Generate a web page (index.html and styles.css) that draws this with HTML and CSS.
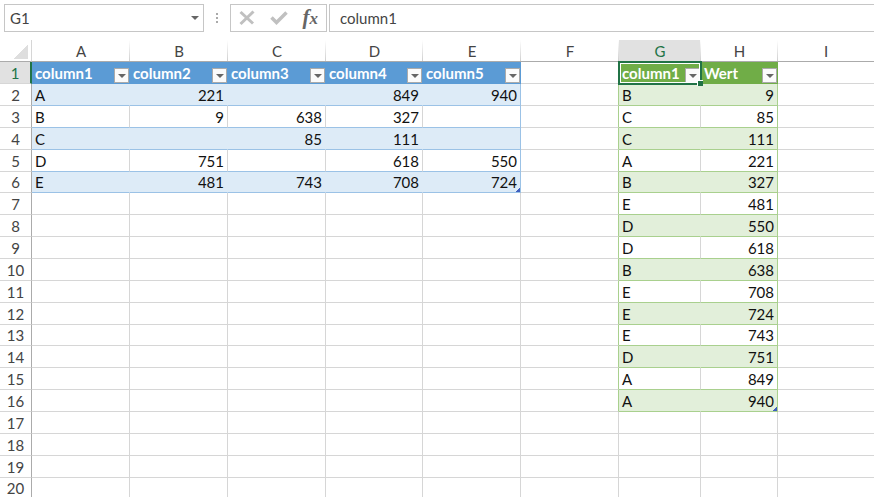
FILE: index.html
```html
<!DOCTYPE html>
<html lang="de">
<head>
    <title>Tabelle</title>
    <meta charset="UTF-8">
    <meta name="viewport" content="width=device-width, initial-scale=1">
    <link rel="stylesheet" href="styles.css">
</head>
<body>
    <div class="toolbar">
        <div class="name-box">
            <input class="name-input" type="text" value="G1" aria-label="Name">
            <button class="name-toggle" type="button" aria-label="Namen anzeigen"><span class="arrow"></span></button>
        </div>
        <div class="grip"><i></i><i></i><i></i></div>
        <div class="actions">
            <button type="button" aria-label="Abbrechen">
                <svg width="18" height="18" viewBox="0 0 18 18">
                    <path d="M2.500 3 L15 14.500 M15.500 2.500 L2.500 15" fill="none" stroke="#c0c0c0" stroke-width="3"/>
                </svg>
            </button>
            <button type="button" aria-label="Eingeben">
                <svg width="18" height="18" viewBox="0 0 18 18">
                    <path d="M1.500 8.500 L6.500 13.500 L16.500 3.500" fill="none" stroke="#c0c0c0" stroke-width="3.500"/>
                </svg>
            </button>
            <button class="fx" type="button" aria-label="Funktion einfügen">f<span>x</span></button>
        </div>
        <input class="formula" type="text" value="column1" aria-label="Bearbeitungsleiste">
    </div>

    <table class="sheet">
        <colgroup>
            <col class="col-head">
            <col class="col-wide"><col class="col-wide"><col class="col-wide"><col class="col-d"><col class="col-wide"><col class="col-wide">
            <col class="col-g"><col class="col-h"><col>
        </colgroup>
        <thead>
            <tr>
                <th class="corner"></th>
                <th>A</th><th>B</th><th>C</th><th>D</th><th>E</th><th>F</th>
                <th class="active">G</th><th>H</th><th>I</th>
            </tr>
        </thead>
        <tbody id="rows"></tbody>
    </table>
    <script src="script.js"></script>
</body>
</html>
```

FILE: styles.css
```css
* {
    box-sizing: border-box;
}

body {
    margin: 0;
    overflow: hidden;
    background-color: white;
    color: #111;
    font-family: Lato, "Liberation Sans", sans-serif;
    font-size: 15px;
}

button, input {
    border: 0;
    padding: 0;
    background: none;
    color: inherit;
    font: inherit;
}

button {
    display: flex;
    align-items: center;
    justify-content: center;
}

/* formula bar */

.toolbar {
    display: flex;
    height: 40px;
    padding: 4px 0 8px 4px;
    color: #444;
}

.name-box, .actions, .formula {
    border: 1px solid #c6c6c6;
}

.name-box {
    display: flex;
    width: 200px;
}

.name-input {
    flex: 1;
    min-width: 0;
    padding-left: 5px;
}

.name-toggle {
    width: 16px;
}

.arrow {
    border: 4px solid transparent;
    border-top-color: #666;
    border-bottom: 0;
}

.grip {
    display: flex;
    flex-direction: column;
    align-items: center;
    justify-content: center;
    gap: 2px;
    width: 26px;
}

.grip i {
    width: 2px;
    height: 2px;
    background-color: #aaa;
}

.actions {
    display: flex;
    width: 97px;
    margin-right: 2px;
}

.actions button {
    flex: 1;
}

.actions .fx {
    align-items: baseline;
    color: #666;
    font: italic bold 21px/24px "Liberation Serif", serif;
}

.fx span {
    font-size: 17px;
}

.formula {
    flex: 1;
    min-width: 0;
    border-right: 0;
    padding-left: 10px;
}

/* grid */

.sheet {
    width: 100%;
    table-layout: fixed;
    border-collapse: separate;
    border-spacing: 0;
}

.col-head {
    width: 32px;
}

.col-wide {
    width: 98px;
}

.col-d {
    width: 97px;
}

.col-g {
    width: 82px;
}

.col-h {
    width: 77px;
}

.sheet tr {
    height: 22px;
}

.sheet tbody tr:nth-child(7n + 6) {
    height: 21px;
}

.sheet th, .sheet td {
    padding: 1px 3px;
    border-right: 1px solid #d6d6d6;
    border-bottom: 1px solid #d6d6d6;
    line-height: 18px;
    white-space: nowrap;
}

.sheet th {
    color: #444;
    font-weight: normal;
}

/* column separators fade out towards the top */
.sheet thead th {
    border-right: 0;
    border-bottom-color: #ababab;
    background: linear-gradient(white, #cfcfcf) right / 1px 100% no-repeat;
}

.sheet tbody th {
    padding: 1px 0;
    border-right-color: #ababab;
}

.sheet tr > :last-child {
    border-right: 0;
}

.sheet thead th:last-child {
    background: none;
}

.sheet thead .corner {
    border-right: 1px solid #d6d6d6;
    background: linear-gradient(135deg, transparent 50%, #dedede 50%) 14px 5px / 14px 14px no-repeat;
}

.sheet th.active {
    background-color: #e1e1e1;
    color: #217346;
}

.sheet tbody th.active {
    border-right: 2px solid #217346;
}

.number {
    text-align: right;
}

/* tables */

.sheet .blue {
    border-bottom-color: #9bc2e6;
}

.sheet .green {
    border-bottom-color: #a9d08e;
}

.sheet .blue.last {
    border-right-color: #9bc2e6;
}

.sheet .green.last, .sheet .before-green {
    border-right-color: #a9d08e;
}

.sheet .blue.band {
    background-color: #ddebf7;
}

.sheet .green.band {
    background-color: #e2efda;
}

.sheet .band:not(.last) {
    border-right-color: transparent;
}

.sheet .title {
    position: relative;
    padding: 0;
    color: white;
    font-weight: bold;
}

.sheet .blue.title {
    border-color: #5b9bd5;
    background-color: #5b9bd5;
}

.sheet .green.title {
    border-color: #70ad47;
    background-color: #70ad47;
}

.title div {
    display: flex;
    align-items: center;
    justify-content: space-between;
    height: 21px;
    padding-left: 3px;
}

.filter {
    align-self: flex-end;
    width: 15px;
    height: 15px;
    border: 1px solid #ababab;
    background-color: #fbfbfb;
}

/* the selection frame lies over the cell borders */
.selected::before {
    content: "";
    position: absolute;
    z-index: 1;
    inset: -1px -2px -2px -1px;
    border: 2px solid #217346;
    box-shadow: inset 0 0 0 1px white;
    pointer-events: none;
}

.selected::after {
    content: "";
    position: absolute;
    z-index: 2;
    right: -3px;
    bottom: -3px;
    width: 5px;
    height: 5px;
    border: solid white;
    border-width: 1px 0 0 1px;
    background-color: #217346;
}

.corner-mark {
    background-image: linear-gradient(135deg, transparent 50%, #3f5fbf 50%);
    background-position: right bottom;
    background-repeat: no-repeat;
    background-size: 4px 4px;
}
```

FILE: script.js
```js
const ROW_COUNT = 20;

const left = [
    ['column1', 'column2', 'column3', 'column4', 'column5'],
    ['A', 221, '', 849, 940],
    ['B', 9, 638, 327, ''],
    ['C', '', 85, 111, ''],
    ['D', 751, '', 618, 550],
    ['E', 481, 743, 708, 724],
];

const right = [
    ['column1', 'Wert'],
    ['B', 9], ['C', 85], ['C', 111], ['A', 221], ['B', 327],
    ['E', 481], ['D', 550], ['D', 618], ['B', 638], ['E', 708],
    ['E', 724], ['E', 743], ['D', 751], ['A', 849], ['A', 940],
];

const renderCells = function (data, color, row, columns) {
    let html = '';
    for (let i = 0; i < columns; i++) {
        if (row >= data.length) {
            html += '<td></td>';
            continue;
        }
        const value = data[row][i];
        const classes = [color];
        if (i === columns - 1) classes.push('last');
        if (row === 0) {
            classes.push('title');
            if (color === 'green' && i === 0) classes.push('selected');
            html += `<td class="${classes.join(' ')}"><div>${value}<button class="filter" type="button" aria-label="Filter ${value}"><span class="arrow"></span></button></div></td>`;
            continue;
        }
        if (row % 2 === 1) classes.push('band');
        if (typeof value === 'number') classes.push('number');
        if (row === data.length - 1 && i === columns - 1) classes.push('corner-mark');
        html += `<td class="${classes.join(' ')}">${value}</td>`;
    }
    return html;
};

let rows = '';
for (let row = 0; row < ROW_COUNT; row++) {
    rows += `<tr><th${row === 0 ? ' class="active"' : ''}>${row + 1}</th>`;
    rows += renderCells(left, 'blue', row, 5);
    rows += `<td${row < right.length ? ' class="before-green"' : ''}></td>`;
    rows += renderCells(right, 'green', row, 2);
    rows += '<td></td></tr>';
}
document.getElementById('rows').innerHTML = rows;
```
